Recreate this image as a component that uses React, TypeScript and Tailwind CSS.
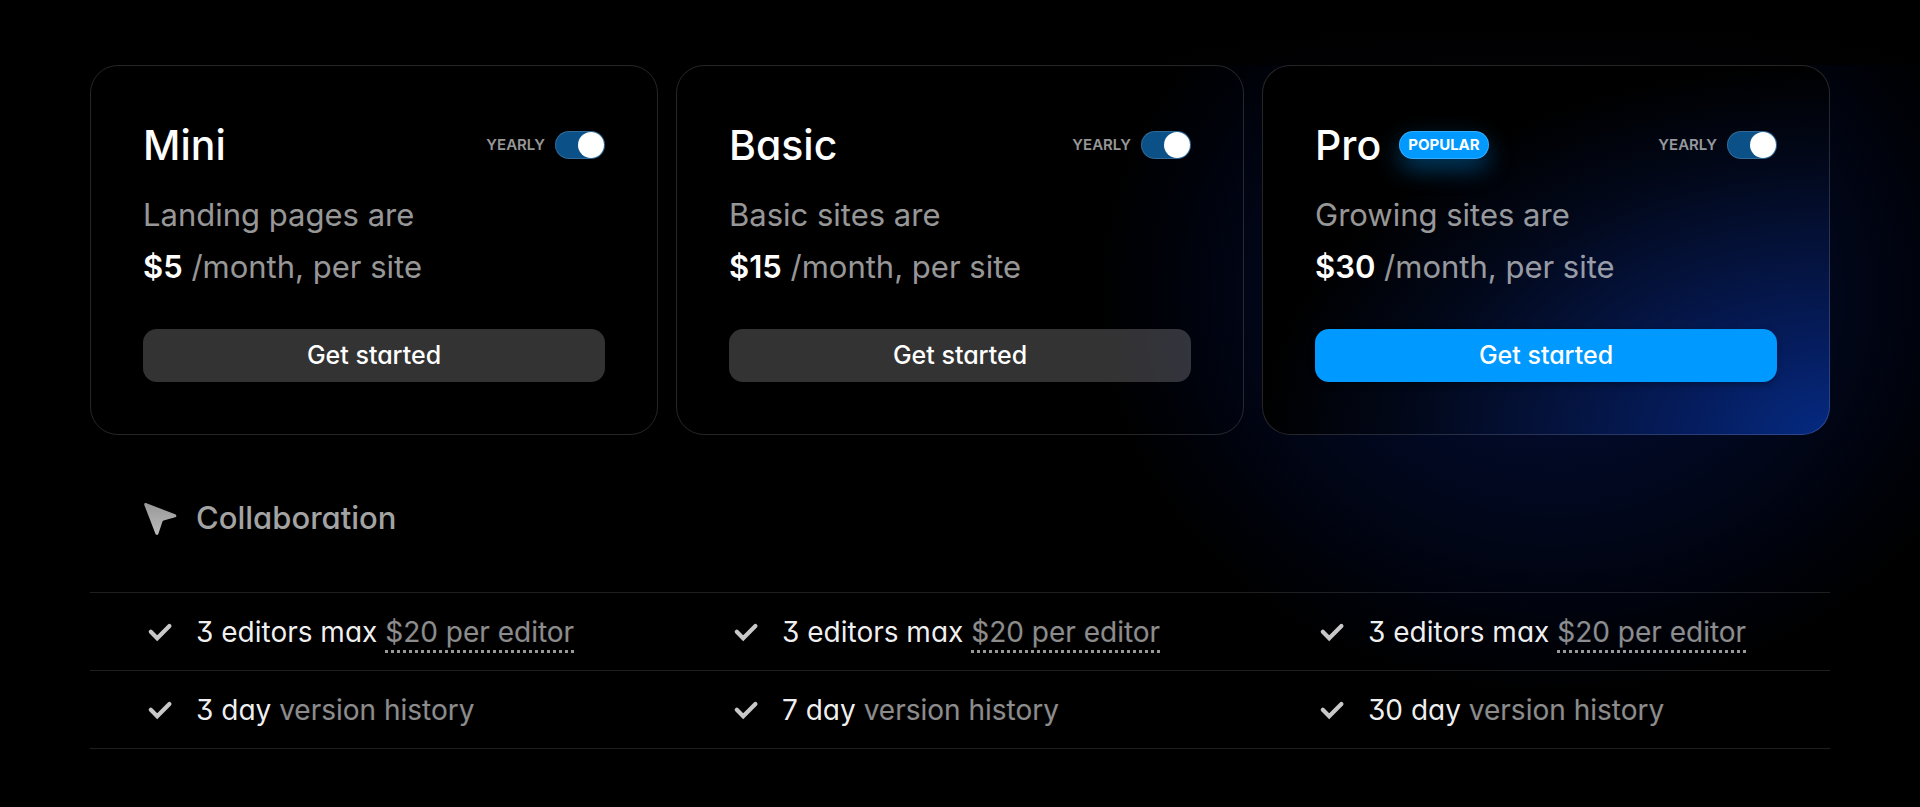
import React from 'react';

type Plan = {
  name: string;
  audience: string;
  price: string;
  popular?: boolean;
};

type Feature = {
  key: string;
  values: { label: string; note: string }[];
  linked?: boolean;
};

const plans: Plan[] = [
  { name: 'Mini', audience: 'Landing pages are', price: '$5' },
  { name: 'Basic', audience: 'Basic sites are', price: '$15' },
  { name: 'Pro', audience: 'Growing sites are', price: '$30', popular: true },
];

const features: Feature[] = [
  {
    key: 'editors',
    linked: true,
    values: [
      { label: '3 editors max', note: '$20 per editor' },
      { label: '3 editors max', note: '$20 per editor' },
      { label: '3 editors max', note: '$20 per editor' },
    ],
  },
  {
    key: 'history',
    values: [
      { label: '3 day', note: 'version history' },
      { label: '7 day', note: 'version history' },
      { label: '30 day', note: 'version history' },
    ],
  },
];

const CursorIcon = () => (
  <svg viewBox="0 0 34 34" className="w-[34px] h-[34px]" aria-hidden="true">
    <defs>
      <linearGradient id="cursor-fill" x1="0" y1="0" x2="0" y2="1">
        <stop offset="0" stopColor="#989898" />
        <stop offset="1" stopColor="#bcbcbc" />
      </linearGradient>
    </defs>
    <path
      d="M2.9 1.1 32.2 12.2c1.6.6 1.5 2.5 0 3L20.6 18.6c-.6.2-1 .6-1.2 1.2L15.4 31.8c-.5 1.6-2.5 1.6-3 0L1.3 2.9C.9 1.7 1.8.7 2.9 1.1Z"
      fill="url(#cursor-fill)"
    />
  </svg>
);

const CheckIcon = () => (
  <svg viewBox="0 0 34 34" className="w-[34px] h-[34px]" fill="none" aria-hidden="true">
    <path
      d="m7.8 16.8 6.4 6.4L26.4 11"
      stroke="#c8c8c8"
      strokeWidth="4.2"
      strokeLinecap="round"
      strokeLinejoin="miter"
    />
  </svg>
);

const BillingSwitch = ({ id }: { id: string }) => (
  <div className="flex items-center gap-2.5">
    <label htmlFor={id} className="text-[15px] font-semibold text-white/60">
      YEARLY
    </label>
    <input
      id={id}
      type="checkbox"
      role="switch"
      defaultChecked
      className="relative appearance-none w-[50px] h-7 rounded-full border border-white/15 bg-[#333] checked:bg-[#0b5086] cursor-pointer before:content-[''] before:absolute before:top-0 before:left-0 before:size-[26px] before:rounded-full before:bg-white checked:before:left-[22px]"
    />
  </div>
);

const PlanCard = ({ plan }: { plan: Plan }) => (
  <article
    className={`rounded-[28px] border border-white/15 p-[52px] ${
      plan.popular
        ? 'bg-black bg-[radial-gradient(100%_100%_at_100%_100%,#052a82_0%,#051c5c_26%,#041138_52%,#02081a_74%,#000_100%)] bg-origin-border'
        : ''
    }`}
  >
    <div className="flex items-center justify-between h-[54px]">
      <div className="flex items-center gap-[18px]">
        <h2 className="text-[41px] leading-12 font-medium [font-feature-settings:'cv11']">
          {plan.name}
        </h2>
        {plan.popular && (
          <span className="h-7 px-2 flex items-center rounded-full border border-white/20 bg-[#09f] text-[15px] font-bold shadow-[0_10px_24px_rgba(0,153,255,0.4)]">
            POPULAR
          </span>
        )}
      </div>
      <BillingSwitch id={`yearly-${plan.name}`} />
    </div>
    <p className="mt-[17px] text-[31px] leading-[52px] text-white/60">
      {plan.audience}
      <br />
      <strong className="font-semibold text-white">{plan.price}</strong> /month, per site
    </p>
    <button
      type="button"
      className={`mt-9 w-full h-[53px] rounded-[14px] text-[25px] font-medium [font-feature-settings:'cv11'] ${
        plan.popular ? 'bg-[#09f] shadow-[0_3px_6px_rgba(0,0,0,0.3)]' : 'bg-white/20'
      }`}
    >
      Get started
    </button>
  </article>
);

const FeatureTable = () => (
  <table className="block w-full border-t border-white/12" aria-labelledby="collaboration">
    <tbody className="block">
      {features.map((feature) => (
        <tr
          key={feature.key}
          className="grid grid-cols-3 gap-[18px] h-[78px] border-b border-white/12"
        >
          {feature.values.map(({ label, note }, index) => (
            <td
              key={index}
              className="flex items-center gap-[19px] pl-[53px] text-[28px] leading-9 whitespace-nowrap [font-feature-settings:'cv09','cv11']"
            >
              <CheckIcon />
              <span className="text-white/95">
                {label}{' '}
                <span
                  className={`text-white/55 ${
                    feature.linked ? 'pb-px border-b-[3px] border-dotted border-white/60' : ''
                  }`}
                >
                  {note}
                </span>
              </span>
            </td>
          ))}
        </tr>
      ))}
    </tbody>
  </table>
);

const App = () => (
  <div className="min-h-screen bg-black text-white font-['Inter','Liberation_Sans',sans-serif]">
    <div className="h-[65px] bg-[radial-gradient(400px_40px_at_80%_100%,#020206,#000)]" />
    <main className="px-[90px] pb-14 bg-[radial-gradient(460px_400px_at_81%_230px,#03103a_0%,#020a28_33%,#010618_62%,#00020a_84%,#000_100%)]">
      <section className="grid grid-cols-3 gap-[18px]">
        {plans.map((plan) => (
          <PlanCard key={plan.name} plan={plan} />
        ))}
      </section>
      <section>
        <h2
          id="collaboration"
          className="flex items-center gap-[19px] h-[157px] pt-2.5 pl-[53px] text-[31px] font-medium text-[#a3a3a3] [font-feature-settings:'cv11']"
        >
          <CursorIcon />
          Collaboration
        </h2>
        <FeatureTable />
      </section>
    </main>
  </div>
);

export default App;
